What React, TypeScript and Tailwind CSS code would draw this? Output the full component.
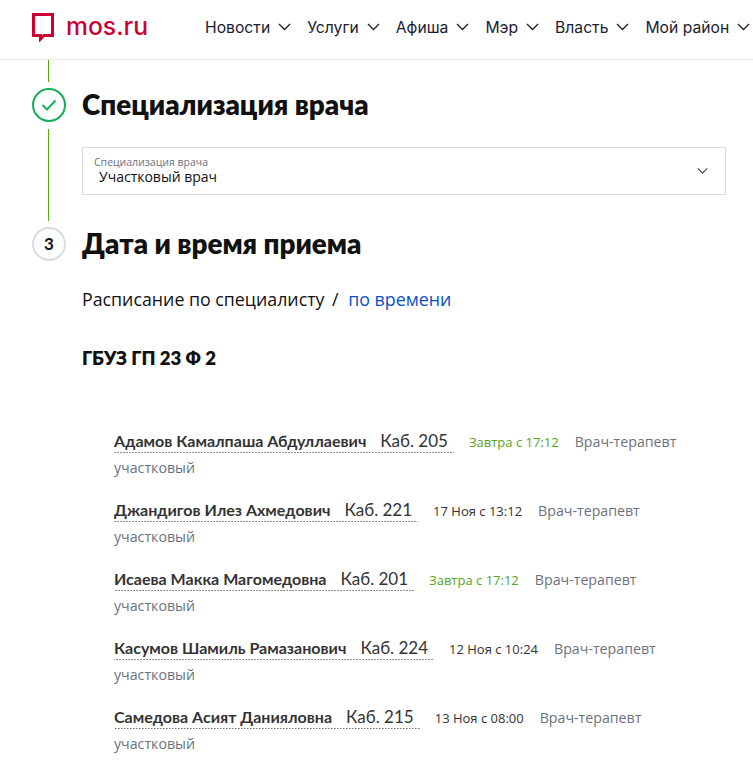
const navItems = ["Новости", "Услуги", "Афиша", "Мэр", "Власть", "Мой район"];

const doctors = [
  { name: "Адамов Камалпаша Абдуллаевич", room: "Каб. 205", date: "Завтра с 17:12", soon: true },
  { name: "Джандигов Илез Ахмедович", room: "Каб. 221", date: "17 Ноя с 13:12", soon: false },
  { name: "Исаева Макка Магомедовна", room: "Каб. 201", date: "Завтра с 17:12", soon: true },
  { name: "Касумов Шамиль Рамазанович", room: "Каб. 224", date: "12 Ноя с 10:24", soon: false },
  { name: "Самедова Асият Данияловна", room: "Каб. 215", date: "13 Ноя с 08:00", soon: false },
];

function Chevron({ className }: { className?: string }) {
  return (
    <svg className={className} width="13" height="8" viewBox="0 0 13 8" fill="none">
      <path d="M1 1l5.5 5.5L12 1" stroke="currentColor" strokeWidth="1.3" />
    </svg>
  );
}

function Header() {
  return (
    <header className="h-[60px] border-b border-[#e8e8e8] flex items-center pl-[32px] whitespace-nowrap overflow-hidden">
      <svg width="22" height="29" viewBox="0 0 22 29" className="shrink-0 mb-[4px]">
        <path d="M1.5 1.5h19v21H12l-3.5 3.5v-3.5h-7z" fill="none" stroke="#cc0033" strokeWidth="3" />
      </svg>
      <span className="ml-[12px] mb-[5px] font-['Inter',sans-serif] font-medium text-[24.7px] text-[#cc0033]">mos.ru</span>
      <nav className="ml-[57px] flex gap-[16px] font-['Inter',sans-serif] text-[15.7px] text-[#1a2030] -mt-[4px]">
        {navItems.map((item) => (
          <span key={item} className="flex items-center gap-[8px] shrink-0">
            {item}
            <Chevron />
          </span>
        ))}
      </nav>
    </header>
  );
}

function DoctorRow({ doctor }: { doctor: (typeof doctors)[number] }) {
  return (
    <p className="text-[14.2px] leading-[25px] text-[#6b7280] font-['Open_Sans',sans-serif] h-[69px]">
      <span className="bg-[linear-gradient(to_right,#222_1px,transparent_1px)] bg-[length:3px_1px] bg-bottom bg-repeat-x pb-[2px] mr-[15px]">
        <span className="font-['Lato',sans-serif] font-bold text-[16.05px] text-[#333]">{doctor.name}</span>
        <span className="font-['Lato',sans-serif] text-[17px] text-[#333] ml-[14px] mr-[6px]">{doctor.room}</span>
      </span>
      <span className={`text-[13px] mr-[16px] ${doctor.soon ? "text-[#55a61c]" : "text-[#333]"}`}>{doctor.date}</span>
      Врач-терапевт участковый
    </p>
  );
}

export default function App() {
  return (
    <div className="h-[770px] overflow-hidden bg-white text-[#111]">
      <Header />
      <main className="pl-[32px] pr-[27px]">
        <div className="pl-[16px]"><div className="w-px h-[22px] bg-[#5aa810]" /></div>
        <div className="flex items-center gap-[16px] h-[34px] mt-[6px]">
          <div className="w-[34px] h-[34px] rounded-full border-2 border-[#16ad5b] flex items-center justify-center shrink-0">
            <svg width="16" height="12" viewBox="0 0 16 12" fill="none"><path d="M1.5 6l4.5 4.5 8.5-9" stroke="#16ad5b" strokeWidth="2" /></svg>
          </div>
          <h2 className="font-['Lato',sans-serif] font-extrabold text-[27.8px] text-[#111]">Специализация врача</h2>
        </div>
        <div className="flex mt-[7px]">
          <div className="w-[34px] pl-[16px] shrink-0"><div className="w-px h-[92px] bg-[#5aa810]" /></div>
          <div className="ml-[16px] mt-[18px] flex-1 h-[48px] border border-[#dcdcdc] flex items-center justify-between pl-[11px] pr-[17px]">
            <div>
              <div className="font-['Open_Sans',sans-serif] text-[10.5px] leading-[12px] text-[#6b7280]">Специализация врача</div>
              <div className="font-['Open_Sans',sans-serif] text-[14px] leading-[18px] text-[#111] pl-[5px]">Участковый врач</div>
            </div>
            <Chevron className="text-[#444] w-[11px]" />
          </div>
        </div>
        <div className="flex items-center gap-[16px] h-[34px] mt-[6px]">
          <div className="w-[34px] h-[34px] rounded-full border-2 border-[#d8dce3] flex items-center justify-center shrink-0 font-['Lato',sans-serif] font-bold text-[17px]">3</div>
          <h2 className="font-['Lato',sans-serif] font-extrabold text-[27.8px] text-[#111]">Дата и время приема</h2>
        </div>
        <div className="pl-[50px]">
          <p className="mt-[26px] font-['Open_Sans',sans-serif] text-[17.8px] leading-[24px] text-[#111]">
            Расписание по специалисту <span className="ml-[3px] mr-[5px]">/</span> <span className="text-[#0b50c4]">по времени</span>
          </p>
          <h3 className="mt-[35px] font-['Lato',sans-serif] font-extrabold text-[18.6px] leading-[24px] text-[#111]">ГБУЗ ГП 23 Ф 2</h3>
          <div className="mt-[58px] pl-[32px] w-[620px]">
            {doctors.map((d) => (
              <DoctorRow key={d.name} doctor={d} />
            ))}
          </div>
        </div>
      </main>
    </div>
  );
}
